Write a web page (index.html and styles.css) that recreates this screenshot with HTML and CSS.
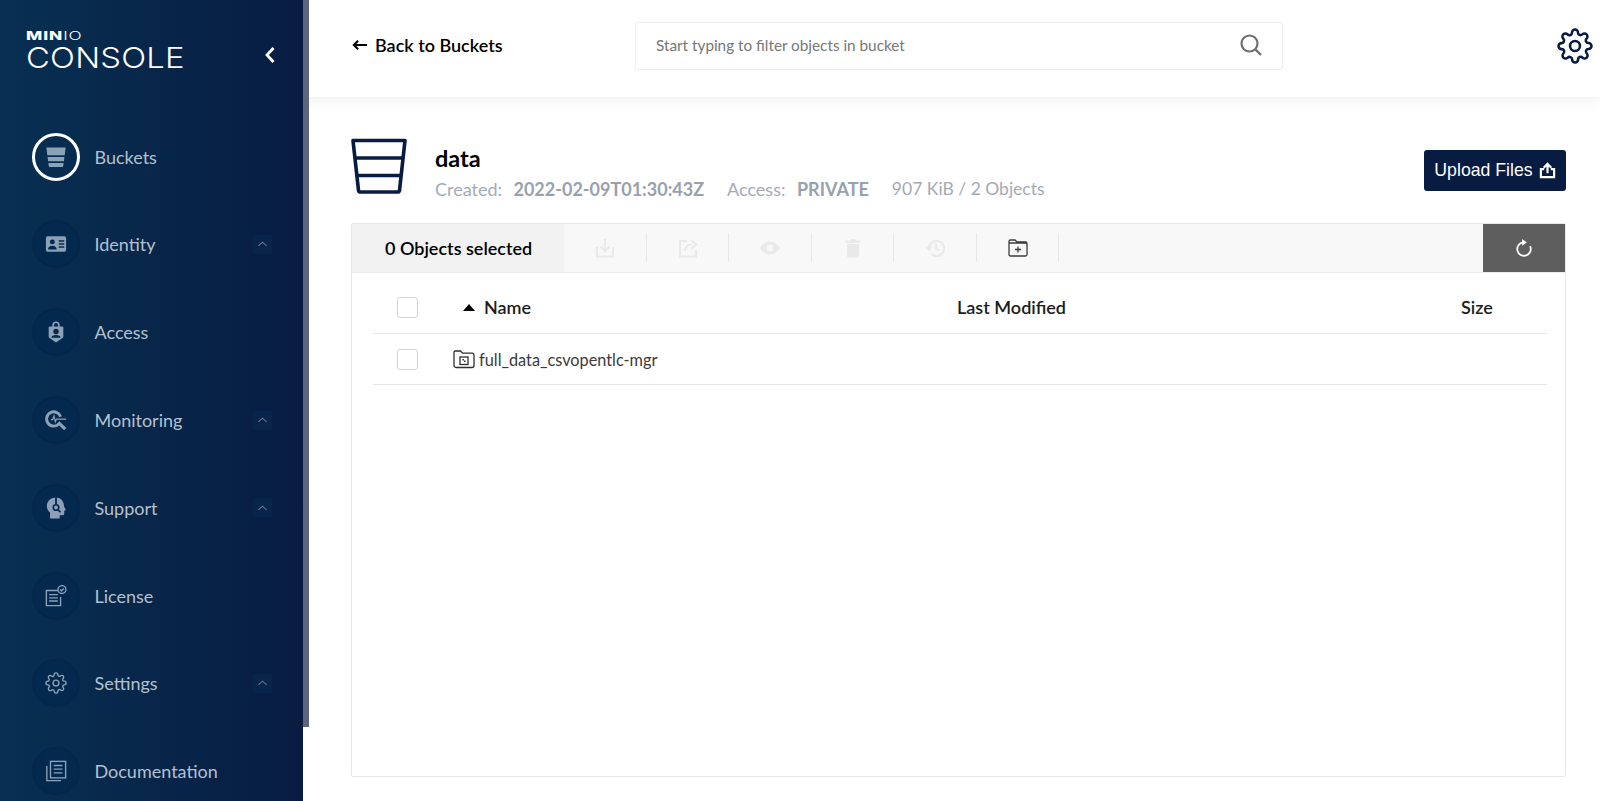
FILE: index.html
```html
<!DOCTYPE html>
<html lang="en">
<head>
<meta charset="utf-8">
<title>MinIO Console</title>
<link rel="stylesheet" href="styles.css">
</head>
<body>
<div class="app">
  <aside class="sidebar">
    <div class="brand">
      <div class="logo">
        <div class="logo-top"><b>MIN</b><span>IO</span></div>
        <div class="logo-name">CONSOLE</div>
      </div>
      <svg class="collapse" viewBox="0 0 12 18"><path d="M9.500 2 3 9l6.500 7" fill="none" stroke="#fff" stroke-width="2.800"/></svg>
    </div>
    <nav class="nav">
      <div class="nav-item">
        <span class="nav-circle active"><svg class="nav-icon" viewBox="0 0 24 24"><path fill="currentColor" d="M1.500 1.500h21l-1 8.500h-19zM2.800 12h18.400l-.6 4.500H3.400zM3.700 18.500h16.600l-.5 3.500a1 1 0 0 1-1 1H5.200a1 1 0 0 1-1-1z"/></svg></span>
        <span class="nav-label">Buckets</span>
      </div>
      <div class="nav-item">
        <span class="nav-circle"><svg class="nav-icon" viewBox="0 0 24 24"><path fill="currentColor" fill-rule="evenodd" d="M3 3.500h18a2 2 0 0 1 2 2v13a2 2 0 0 1-2 2H3a2 2 0 0 1-2-2v-13a2 2 0 0 1 2-2zm12 4.500v1.600h6V8zm0 3.200v1.600h6v-1.600zm0 3.200V16h6v-1.600zM8 7a2.700 2.700 0 1 0 0 5.400A2.700 2.700 0 0 0 8 7zM3.200 18h9.600c0-2.700-2.200-4.200-4.800-4.200S3.200 15.300 3.200 18z"/></svg></span>
        <span class="nav-label">Identity</span>
        <span class="nav-toggle"><svg viewBox="0 0 12 8"><path d="M1.500 6 6 2l4.500 4" fill="none" stroke="currentColor" stroke-width="1.100"/></svg></span>
      </div>
      <div class="nav-item">
        <span class="nav-circle"><svg class="nav-icon" viewBox="0 0 24 24"><path fill="currentColor" fill-rule="evenodd" d="M8 6V4.500a4 4 0 0 1 8 0V6h3a1 1 0 0 1 1 1v9.500c0 1-.5 1.800-1.300 2.300L12 23.500l-6.700-4.700c-.8-.5-1.300-1.300-1.300-2.300V7a1 1 0 0 1 1-1zM9.800 6h4.400V4.500a2.200 2.200 0 0 0-4.400 0zM12 8.500a3 3 0 1 0 0 6 3 3 0 0 0 0-6zM7 18.300h10c0-2.300-2.300-3.100-5-3.100s-5 .8-5 3.100z"/></svg></span>
        <span class="nav-label">Access</span>
      </div>
      <div class="nav-item">
        <span class="nav-circle"><svg class="nav-icon" viewBox="0 0 24 24" fill="none" stroke="currentColor"><path stroke-width="3.200" d="M17 8.500A7.800 7.800 0 1 0 15.500 16"/><path stroke-width="3.400" d="m14.500 14.500 7.500 7.500"/><path stroke-width="1.300" d="M6.500 11.500h2l1.300-4 1.500 6.500 1.200-3H23"/></svg></span>
        <span class="nav-label">Monitoring</span>
        <span class="nav-toggle"><svg viewBox="0 0 12 8"><path d="M1.500 6 6 2l4.500 4" fill="none" stroke="currentColor" stroke-width="1.100"/></svg></span>
      </div>
      <div class="nav-item">
        <span class="nav-circle"><svg class="nav-icon" viewBox="0 0 24 24"><path fill="currentColor" d="M12 .5C5.500.5 2 5 2 10c0 3 1.300 5 3.500 6.800V23.500h10.500V20h3c1.300 0 2-1 2-2v-3l1.800-.7-2-4C20.500 4.500 17.500.5 12 .5z"/><path d="M12 0v8" fill="none" stroke="#04294e" stroke-width="2"/><circle cx="12" cy="11.500" r="3" fill="none" stroke="#04294e" stroke-width="1.800"/><path d="m14 14 3 2.500" fill="none" stroke="#04294e" stroke-width="1.600"/></svg></span>
        <span class="nav-label">Support</span>
        <span class="nav-toggle"><svg viewBox="0 0 12 8"><path d="M1.500 6 6 2l4.500 4" fill="none" stroke="currentColor" stroke-width="1.100"/></svg></span>
      </div>
      <div class="nav-item">
        <span class="nav-circle"><svg class="nav-icon" viewBox="0 0 24 24" fill="none" stroke="currentColor" stroke-width="1.500"><path d="M14 6H1.500v16.500h15.500V13"/><path d="M4.500 10.500h9.500M4.500 14h9.500M4.500 17.500h9.500"/><circle cx="18.500" cy="5" r="4.300"/><path d="m16.500 5 1.500 1.500 2.500-2.700"/></svg></span>
        <span class="nav-label">License</span>
      </div>
      <div class="nav-item">
        <span class="nav-circle"><svg class="nav-icon" viewBox="0 0 24 24" fill="none" stroke="currentColor" stroke-width="1.500"><circle cx="12" cy="12" r="3.200"/><path d="M19.400 15a1.650 1.650 0 0 0 .33 1.820l.06.06a2 2 0 0 1 0 2.830 2 2 0 0 1-2.830 0l-.06-.06a1.650 1.650 0 0 0-1.820-.33 1.650 1.650 0 0 0-1 1.510V21a2 2 0 0 1-2 2 2 2 0 0 1-2-2v-.09A1.650 1.650 0 0 0 9 19.400a1.650 1.650 0 0 0-1.820.33l-.06.06a2 2 0 0 1-2.830 0 2 2 0 0 1 0-2.830l.06-.06a1.650 1.650 0 0 0 .33-1.820 1.650 1.650 0 0 0-1.510-1H3a2 2 0 0 1-2-2 2 2 0 0 1 2-2h.09A1.650 1.650 0 0 0 4.600 9a1.650 1.650 0 0 0-.33-1.820l-.06-.06a2 2 0 0 1 0-2.830 2 2 0 0 1 2.830 0l.06.06a1.650 1.650 0 0 0 1.820.33H9a1.650 1.650 0 0 0 1-1.510V3a2 2 0 0 1 2-2 2 2 0 0 1 2 2v.09a1.650 1.650 0 0 0 1 1.510 1.650 1.650 0 0 0 1.820-.33l.06-.06a2 2 0 0 1 2.830 0 2 2 0 0 1 0 2.830l-.06.06a1.650 1.650 0 0 0-.33 1.820V9a1.650 1.650 0 0 0 1.510 1H21a2 2 0 0 1 2 2 2 2 0 0 1-2 2h-.09a1.650 1.650 0 0 0-1.510 1z"/></svg></span>
        <span class="nav-label">Settings</span>
        <span class="nav-toggle"><svg viewBox="0 0 12 8"><path d="M1.500 6 6 2l4.500 4" fill="none" stroke="currentColor" stroke-width="1.100"/></svg></span>
      </div>
      <div class="nav-item">
        <span class="nav-circle"><svg class="nav-icon" viewBox="0 0 24 24" fill="none" stroke="currentColor" stroke-width="1.500"><rect x="6" y="1.500" width="16.500" height="18"/><path d="M9.500 6h9.500M9.500 10h9.500M9.500 14h9.500"/><path d="M2 6.500v16h15.500"/></svg></span>
        <span class="nav-label">Documentation</span>
      </div>
    </nav>
    <span class="scroll-thumb"></span>
  </aside>

  <main class="main">
    <header class="topbar">
      <a class="back"><svg class="back-arrow" viewBox="0 0 16 12"><path d="M16 6H2.500M6.500 1.500 2 6l4.500 4.500" fill="none" stroke="#000" stroke-width="2.200"/></svg>Back to Buckets</a>
      <div class="search">
        <span class="search-text">Start typing to filter objects in bucket</span>
        <svg class="search-icon" viewBox="0 0 22 22"><circle cx="9.500" cy="9.500" r="8" fill="none" stroke="#707070" stroke-width="2.200"/><path d="m15.500 15.500 5.500 5.500" stroke="#707070" stroke-width="2.400"/></svg>
      </div>
      <svg class="top-gear" viewBox="0 0 24 24" fill="none" stroke="#081c42" stroke-width="1.700"><circle cx="12" cy="12" r="3.300"/><path d="M19.400 15a1.650 1.650 0 0 0 .33 1.820l.06.06a2 2 0 0 1 0 2.830 2 2 0 0 1-2.830 0l-.06-.06a1.650 1.650 0 0 0-1.820-.33 1.650 1.650 0 0 0-1 1.510V21a2 2 0 0 1-2 2 2 2 0 0 1-2-2v-.09A1.650 1.650 0 0 0 9 19.400a1.650 1.650 0 0 0-1.820.33l-.06.06a2 2 0 0 1-2.830 0 2 2 0 0 1 0-2.830l.06-.06a1.650 1.650 0 0 0 .33-1.820 1.650 1.650 0 0 0-1.510-1H3a2 2 0 0 1-2-2 2 2 0 0 1 2-2h.09A1.650 1.650 0 0 0 4.600 9a1.650 1.650 0 0 0-.33-1.820l-.06-.06a2 2 0 0 1 0-2.830 2 2 0 0 1 2.830 0l.06.06a1.650 1.650 0 0 0 1.820.33H9a1.650 1.650 0 0 0 1-1.510V3a2 2 0 0 1 2-2 2 2 0 0 1 2 2v.09a1.650 1.650 0 0 0 1 1.510 1.650 1.650 0 0 0 1.820-.33l.06-.06a2 2 0 0 1 2.830 0 2 2 0 0 1 0 2.830l-.06.06a1.650 1.650 0 0 0-.33 1.820V9a1.650 1.650 0 0 0 1.510 1H21a2 2 0 0 1 2 2 2 2 0 0 1-2 2h-.09a1.650 1.650 0 0 0-1.510 1z"/></svg>
    </header>

    <div class="content">
      <section class="bucket-head">
        <svg class="bucket-icon" viewBox="0 0 56 56" fill="none" stroke="#081c42" stroke-width="3.600" stroke-linejoin="round"><path d="M2 2.500h52l-5.500 50a2 2 0 0 1-2 1.500H9.500a2 2 0 0 1-2-1.500z"/><path d="M4 20h48M6 37.500h44"/></svg>
        <div class="bucket-info">
          <h1 class="bucket-name">data</h1>
          <div class="bucket-meta"><span>Created:</span><b>2022-02-09T01:30:43Z</b><span class="meta-gap">Access:</span><b>PRIVATE</b><span class="meta-gap meta-size">907 KiB / 2 Objects</span></div>
        </div>
        <button class="upload">Upload Files<svg viewBox="0 0 18 18" fill="none" stroke="#fff" stroke-width="2.300"><path d="M5.500 7.500H2v8.500h14V7.500h-3.500M9 12V3M5 6l4-4 4 4"/></svg></button>
      </section>

      <section class="browser">
        <div class="toolbar">
          <div class="selected">0 Objects selected</div>
          <span class="tool off"><svg viewBox="0 0 20 20" fill="none" stroke="currentColor" stroke-width="2"><path d="M10 1v12M5.500 8.500 10 13l4.500-4.500M2 9v9.500h16V9"/></svg></span>
          <span class="tool off"><svg viewBox="0 0 20 20" fill="none" stroke="currentColor" stroke-width="2"><path d="M9 3H2v15.500h16V12"/><path d="M7 13c0-4 3-6.500 7-6.500M13 2l5.500 4.500L13 11"/></svg></span>
          <span class="tool off"><svg viewBox="0 0 20 20"><path fill="currentColor" fill-rule="evenodd" d="M10 3.500c4.500 0 8 3 10 6.500-2 3.500-5.500 6.500-10 6.500S2 13.500 0 10c2-3.500 5.500-6.500 10-6.500zm0 3a3.500 3.500 0 1 0 0 7 3.500 3.500 0 0 0 0-7z"/></svg></span>
          <span class="tool off"><svg viewBox="0 0 20 20"><path fill="currentColor" d="M3 2.500h4l1-1.500h4l1 1.500h4V5H3zM4 6h12v12a1.500 1.500 0 0 1-1.500 1.500h-9A1.500 1.500 0 0 1 4 18z"/></svg></span>
          <span class="tool off"><svg viewBox="0 0 20 20" fill="none" stroke="currentColor" stroke-width="2.200"><path d="M4 10a7.500 7.500 0 1 1 2.500 6M11 5.500v5l3.500 2"/><path d="M0 8.500h7.500L4 13z" fill="currentColor" stroke="none"/></svg></span>
          <span class="tool"><svg viewBox="0 0 20 20" fill="none" stroke="#3a3a3a" stroke-width="1.300"><path d="M1 5V3.500A1.500 1.500 0 0 1 2.500 2h4.500l2 2h8.500A1.500 1.500 0 0 1 19 5.500v11a1.500 1.500 0 0 1-1.500 1.500h-15A1.500 1.500 0 0 1 1 16.500zh18M10 8.500v6M7 11.500h6"/></svg></span>
          <button class="refresh"><svg viewBox="0 0 20 20" fill="none" stroke="#fff" stroke-width="2"><path d="M16.800 8A7.500 7.500 0 1 1 9 3.800"/><path d="M8 0v7.600l5-3.800z" fill="#fff" stroke="none"/></svg></button>
        </div>
        <div class="row row-head">
          <span class="check"></span>
          <span class="col-name"><i class="sort"></i>Name</span>
          <span class="col-mod">Last Modified</span>
          <span class="col-size">Size</span>
        </div>
        <div class="row row-item">
          <span class="check"></span>
          <span class="col-file"><svg viewBox="0 0 22 20" fill="none" stroke="#2e2e2e" stroke-width="1.300"><path d="M1 5V3.500A1.500 1.500 0 0 1 2.500 2h5l2 2.200h10A1.800 1.800 0 0 1 21 6v10.500a2 2 0 0 1-2 2H3a2 2 0 0 1-2-2z"/><rect x="7" y="8" width="8" height="7.500"/><path d="M9.500 10h1.500v1.500H9.500zM11 11.500h1.500V13H11z" fill="#2e2e2e" stroke="none"/></svg>full_data_csvopentlc-mgr</span>
        </div>
      </section>
    </div>
  </main>
</div>
</body>
</html>
```

FILE: styles.css
```css
* { box-sizing: border-box; }
html, body { margin: 0; height: 100%; overflow: hidden; }
body { font-family: Lato, "Open Sans", sans-serif; background: #fff; color: #000; }
.app { display: flex; height: 801px; }

/* sidebar */
.sidebar {
  position: relative;
  z-index: 2;
  width: 303px;
  flex: none;
  background: linear-gradient(90deg, #073052 0%, #081c42 100%);
}
.brand { display: flex; align-items: flex-start; padding: 31px 0 0 26px; height: 112.800px; }
.logo { width: 238px; color: #fff; font-family: Inter, sans-serif; }
.logo-top { font-size: 11.700px; line-height: 10px; letter-spacing: .6px; transform: scaleX(1.480); transform-origin: left center; }
.logo-top b { font-weight: 800; }
.logo-top span { font-weight: 300; }
.logo-name { font-weight: 300; font-size: 29px; line-height: 33px; letter-spacing: .2px; transform: scaleX(1.130); transform-origin: left center; }
.collapse { width: 12px; height: 18px; margin-top: 15px; }
.nav { display: flex; flex-direction: column; }
.nav-item { display: flex; align-items: center; height: 87.800px; padding-left: 32px; flex: none; }
.nav-circle {
  width: 48px; height: 48px; border-radius: 50%;
  background: #04294e; border: 2px solid #04264a;
  display: flex; align-items: center; justify-content: center;
  color: #8ca0b6; flex: none;
}
.nav-circle.active { background: transparent; border: 3px solid #fff; }
.nav-icon { width: 22px; height: 22px; }
.nav-label { margin-left: 14.500px; font-size: 18px; color: #b5c0ce; width: 158px; }
.nav-toggle {
  width: 19px; height: 19px; background: #07244a; color: #64788f;
  display: flex; align-items: center; justify-content: center;
}
.nav-toggle svg { width: 11px; height: 8px; }
.scroll-thumb { position: absolute; left: 303px; top: 0; width: 6px; height: 727px; background: #5c6579; }

/* main */
.main { flex: 1; min-width: 0; display: flex; flex-direction: column; }
.topbar { height: 97px; flex: none; display: flex; align-items: center; padding: 0 7px 5px 49px; background: #fff; box-shadow: 0 3px 12px rgba(0,0,0,.07); position: relative; }
.back { display: flex; align-items: center; font-size: 18px; font-weight: 600; width: 283px; flex: none; color: #000; padding-bottom: 2px; }
.back-arrow { width: 15px; height: 12px; margin-right: 8px; }
.search { width: 648px; height: 48px; flex: none; border: 1.500px solid #ededed; border-radius: 3px; display: flex; align-items: center; justify-content: space-between; padding: 0 20px 2px 20px; }
.search-text { font-size: 15.300px; color: #777; }
.search-icon { width: 22px; height: 22px; }
.top-gear { width: 36px; height: 36px; margin-left: auto; }

.content { flex: 1; display: flex; flex-direction: column; padding: 41px 34px 24px 48px; min-height: 0; }
.bucket-head { display: flex; align-items: flex-start; height: 56px; flex: none; margin-bottom: 29px; }
.bucket-icon { width: 56px; height: 56px; flex: none; }
.bucket-info { margin: 7px 0 0 28px; flex: 1; }
.bucket-name { margin: 0; font-size: 23.500px; line-height: 26px; font-weight: 700; color: #000; }
.bucket-meta { font-size: 18px; color: #a3abb5; line-height: 24px; margin-top: 6px; display: flex; }
.bucket-meta b { margin-left: 11.500px; font-weight: 700; color: #98a1ac; }
.meta-gap { margin-left: 23px; }
.meta-size { font-size: 17.500px; }
.upload { width: 142px; height: 41px; margin-top: 12px; border: 0; border-radius: 3px; background: #081c42; color: #fff; font-family: "Liberation Sans", Arial, sans-serif; font-size: 17.700px; display: flex; align-items: center; justify-content: center; gap: 6px; padding: 0; }
.upload svg { width: 17px; height: 17px; }

.browser { flex: 1; min-height: 0; border: 1px solid #e8e8e8; border-radius: 2px; display: flex; flex-direction: column; }
.toolbar { height: 49px; flex: none; background: #f8f8f8; border-bottom: 1px solid #ececec; display: flex; align-items: stretch; }
.selected { width: 212px; background: #f2f2f2; font-size: 18px; font-weight: 600; color: #000; display: flex; align-items: center; padding-left: 33px; }
.tool { width: 82.500px; display: flex; align-items: center; justify-content: center; position: relative; }
.tool::after { content: ""; position: absolute; right: 0; top: 9px; bottom: 10px; width: 1px; background: #e8e8e8; }
.tool.off { color: #e9e9e9; }
.tool svg { width: 20px; height: 20px; }
.refresh { margin-left: auto; width: 82px; border: 0; padding: 0 1px 0 0; background: #5e5e5e; display: flex; align-items: center; justify-content: center; }
.refresh svg { width: 18px; height: 18px; }

.row { display: flex; align-items: center; margin: 0 18px 0 21px; border-bottom: 1px solid #e7e7e7; padding-left: 24px; }
.row-head { height: 61px; font-size: 18px; font-weight: 600; color: #1c1c1c; padding-top: 8px; }
.row-item { height: 51px; }
.check { width: 21px; height: 21px; border: 1.500px solid #d4d4d4; border-radius: 3px; background: #fff; flex: none; }
.col-name { display: flex; align-items: center; margin-left: 45px; width: 494px; }
.sort { width: 0; height: 0; border-left: 6.500px solid transparent; border-right: 6.500px solid transparent; border-bottom: 7px solid #000; margin-right: 9px; }
.col-mod { width: 504px; flex: none; }
.col-file { display: flex; align-items: center; margin-left: 35px; font-size: 16.300px; color: #3b3b3b; }
.col-file svg { width: 22px; height: 20px; margin-right: 4px; }
```
